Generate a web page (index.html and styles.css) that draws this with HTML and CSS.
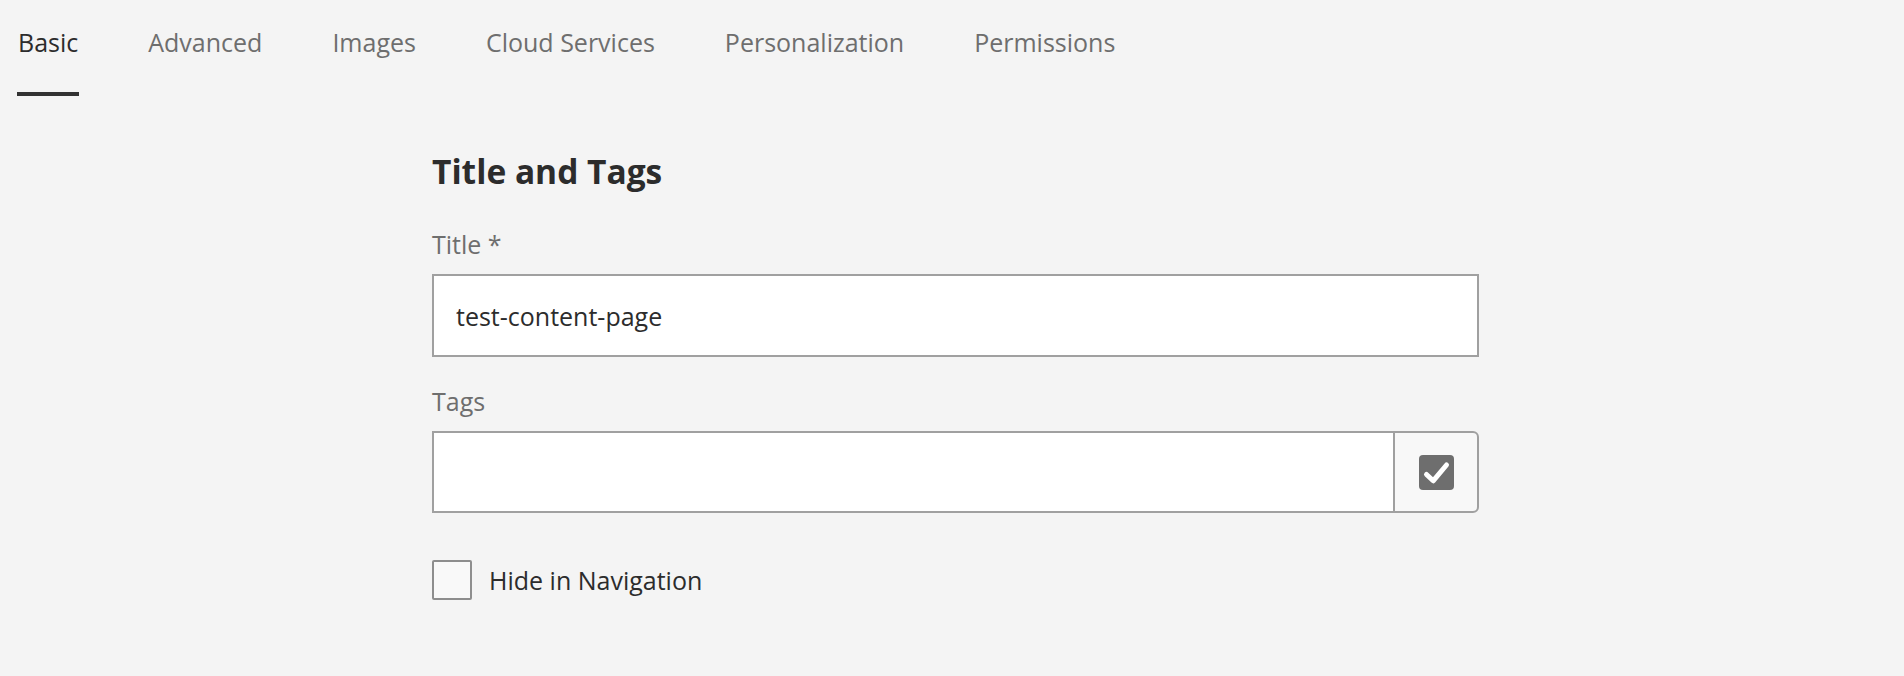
FILE: index.html
```html
<!DOCTYPE html>
<html lang="en">
<head>
<meta charset="utf-8">
<title>Page Properties</title>
<link rel="stylesheet" href="styles.css">
</head>
<body>
<nav class="tabs">
  <a class="tab is-selected">Basic</a>
  <a class="tab">Advanced</a>
  <a class="tab">Images</a>
  <a class="tab">Cloud Services</a>
  <a class="tab">Personalization</a>
  <a class="tab">Permissions</a>
</nav>
<main class="form">
  <h2 class="section-title">Title and Tags</h2>
  <div class="field">
    <label class="field-label" for="title">Title *</label>
    <input class="textfield" id="title" type="text" value="test-content-page">
  </div>
  <div class="field">
    <label class="field-label" for="tags">Tags</label>
    <div class="taggroup">
      <input class="textfield textfield-grouped" id="tags" type="text" value="">
      <button class="tag-btn" type="button" aria-label="Select tags">
        <svg class="tag-icon" viewBox="0 0 35 35" width="35" height="35">
          <rect x="0" y="0" width="35" height="35" rx="4" fill="#6e6e6e"/>
          <path d="M7.5 19.5 L14.2 25.8 L27.5 10" fill="none" stroke="#ffffff" stroke-width="5" stroke-linecap="round" stroke-linejoin="round"/>
        </svg>
      </button>
    </div>
  </div>
  <label class="checkbox">
    <span class="checkbox-box"></span>
    <span class="checkbox-text">Hide in Navigation</span>
  </label>
</main>
</body>
</html>
```

FILE: styles.css
```css
html, body {
  margin: 0;
  padding: 0;
  background: #f4f4f4;
}

body {
  font-family: "Open Sans", "Noto Sans", sans-serif;
  font-size: 25px;
  color: #2c2c2c;
  height: 676px;
  overflow: hidden;
}

.tabs {
  display: flex;
  gap: 70px;
  padding-left: 18px;
  height: 96px;
}

.tab {
  position: relative;
  padding-top: 24px;
  line-height: 36px;
  color: #6e6e6e;
  text-decoration: none;
  white-space: nowrap;
}

.tab.is-selected {
  color: #2c2c2c;
}

.tab.is-selected::after {
  content: "";
  position: absolute;
  left: -1px;
  right: -1px;
  bottom: 0;
  height: 4px;
  background: #323232;
}

.form {
  margin-left: 432px;
  width: 1047px;
}

.section-title {
  margin: 53px 0 33px;
  font-size: 33.5px;
  line-height: 44px;
  font-weight: 700;
  color: #2c2c2c;
}

.field {
  margin-bottom: 26px;
}

.field-label {
  display: block;
  line-height: 36px;
  color: #6e6e6e;
  margin-bottom: 12px;
}

.textfield {
  box-sizing: border-box;
  display: block;
  width: 100%;
  height: 83px;
  margin: 0;
  padding: 0 22px;
  border: 2px solid #a0a0a0;
  border-radius: 0;
  background: #ffffff;
  font: inherit;
  color: #2c2c2c;
  outline: none;
}

.taggroup {
  display: flex;
  height: 82px;
}

.textfield-grouped {
  flex: 1;
  height: 100%;
  border-right: 0;
}

.tag-btn {
  box-sizing: border-box;
  width: 86px;
  height: 100%;
  margin: 0;
  padding: 0;
  border: 2px solid #a0a0a0;
  border-radius: 0 6px 6px 0;
  background: #f8f8f8;
  display: flex;
  align-items: center;
  justify-content: center;
}

.tag-icon {
  display: block;
}

.checkbox {
  display: flex;
  align-items: center;
  gap: 17px;
  height: 40px;
  margin-top: 47px;
}

.checkbox-box {
  box-sizing: border-box;
  width: 40px;
  height: 40px;
  border: 2px solid #8e8e8e;
  border-radius: 2px;
  background: #f9f9f9;
}

.checkbox-text {
  line-height: 36px;
  color: #2c2c2c;
}
```
